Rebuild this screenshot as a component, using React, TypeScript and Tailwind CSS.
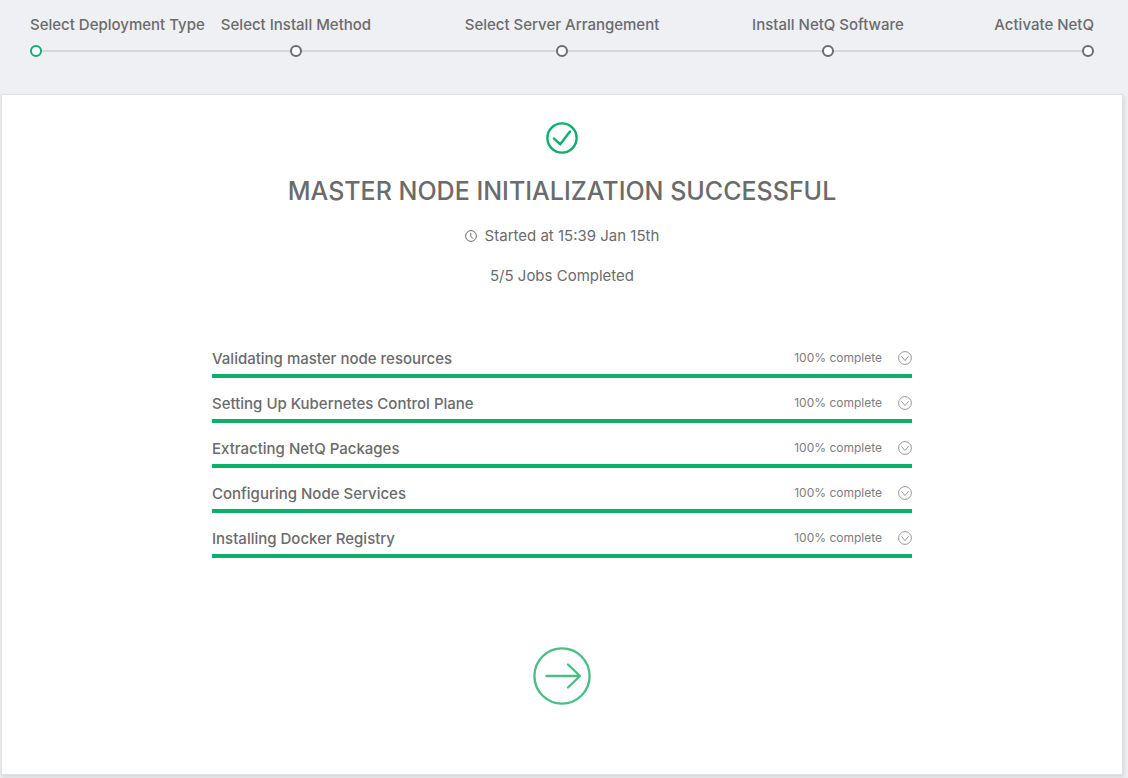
import React from 'react';

const steps = [
  'Select Deployment Type',
  'Select Install Method',
  'Select Server Arrangement',
  'Install NetQ Software',
  'Activate NetQ',
];

const jobs = [
  { name: 'Validating master node resources', percent: 100 },
  { name: 'Setting Up Kubernetes Control Plane', percent: 100 },
  { name: 'Extracting NetQ Packages', percent: 100 },
  { name: 'Configuring Node Services', percent: 100 },
  { name: 'Installing Docker Registry', percent: 100 },
];

const Stepper = () => (
  <ol className="grid grid-cols-8 pl-[30px] pr-[34px] pt-[15px]">
    {steps.map((label, i) => {
      const first = i === 0;
      const last = i === steps.length - 1;
      const span = first || last ? 'col-span-1' : 'col-span-2';
      const align = first ? 'justify-start' : last ? 'justify-end' : 'justify-center';
      return (
        <li key={label} className={span} aria-current={first ? 'step' : undefined}>
          <div className={`flex whitespace-nowrap text-[15px] leading-5 font-medium ${align}`}>
            <span>{label}</span>
          </div>
          <div className="mt-2.5 flex items-center">
            {!first && <div className="h-0.5 flex-1 bg-[#d6d7d8]" />}
            <div
              className={`size-3 rounded-full border-2 bg-white ${first ? 'border-[#0cb06a]' : 'border-[#6b6b6b]'}`}
            />
            {!last && <div className="h-0.5 flex-1 bg-[#d6d7d8]" />}
          </div>
        </li>
      );
    })}
  </ol>
);

const CheckIcon = () => (
  <svg className="size-8" viewBox="0 0 32 32" fill="none" stroke="#0cb06a" strokeWidth="2.4" aria-hidden="true">
    <circle cx="16" cy="16" r="14.6" />
    <path d="M8 16.6 14.2 22.2 24 9.4" strokeLinecap="round" />
  </svg>
);

const ClockIcon = () => (
  <svg className="size-3" viewBox="0 0 12 12" fill="none" stroke="#6b6b6b" aria-hidden="true">
    <circle cx="6" cy="6" r="5.4" />
    <path d="M5.8 2.8V6.2L8 8.6" />
  </svg>
);

const ChevronIcon = () => (
  <svg className="size-3.5" viewBox="0 0 14 14" fill="none" stroke="#8c8c8c" strokeWidth="0.9" aria-hidden="true">
    <circle cx="7" cy="7" r="6.4" />
    <path d="M3.4 5.2 7 9.6 10.6 5.2" />
  </svg>
);

const ArrowIcon = () => (
  <svg className="size-[58px]" viewBox="0 0 58 58" fill="none" stroke="#4dbd88" strokeWidth="2.4" aria-hidden="true">
    <circle cx="29" cy="29" r="27.6" />
    <path d="M13.5 29H47M35 17.5 47 29 35 40.5" strokeLinecap="round" strokeLinejoin="round" />
  </svg>
);

const JobRow = ({ name, percent }: { name: string; percent: number }) => (
  <li>
    <div className="flex items-start">
      <span className="flex-1 text-[15px] leading-5 font-medium">{name}</span>
      <div className="flex items-center gap-4">
        <span className="text-xs leading-[18px] text-[#7d7d7d]">{percent}% complete</span>
        <button type="button" aria-label={`Show details for ${name}`}>
          <ChevronIcon />
        </button>
      </div>
    </div>
    <div
      role="progressbar"
      aria-label={name}
      aria-valuenow={percent}
      aria-valuemin={0}
      aria-valuemax={100}
      className="mt-[5px] h-1"
    >
      <div className="h-full bg-[#0cb06a]" style={{ width: `${percent}%` }} />
    </div>
  </li>
);

const App = () => {
  return (
    <div className="flex min-h-screen flex-col bg-[#eff0f4] font-['Inter',sans-serif] text-[#6b6b6b]">
      <Stepper />

      <main className="mt-[37px] mr-[5px] mb-[3px] ml-px flex flex-1 flex-col items-center border border-[#dfe0e2] bg-white px-6 pt-[27px] pb-16 shadow-[1px_2px_4px_rgba(0,0,0,0.12)]">
        <CheckIcon />
        <h1 className="mt-[21px] text-center text-[25px] leading-8 font-medium">
          MASTER NODE INITIALIZATION SUCCESSFUL
        </h1>
        <p className="mt-[19px] flex items-center gap-2 text-[15px] leading-5">
          <ClockIcon />
          Started at 15:39 Jan 15th
        </p>
        <p className="mt-5 text-[15px] leading-5">5/5 Jobs Completed</p>

        <ul className="mt-[63px] flex w-full max-w-[700px] flex-col gap-4">
          {jobs.map((job) => (
            <JobRow key={job.name} name={job.name} percent={job.percent} />
          ))}
        </ul>

        <button type="button" aria-label="Next" className="mt-[89px] rounded-full">
          <ArrowIcon />
        </button>
      </main>
    </div>
  );
};

export default App;
